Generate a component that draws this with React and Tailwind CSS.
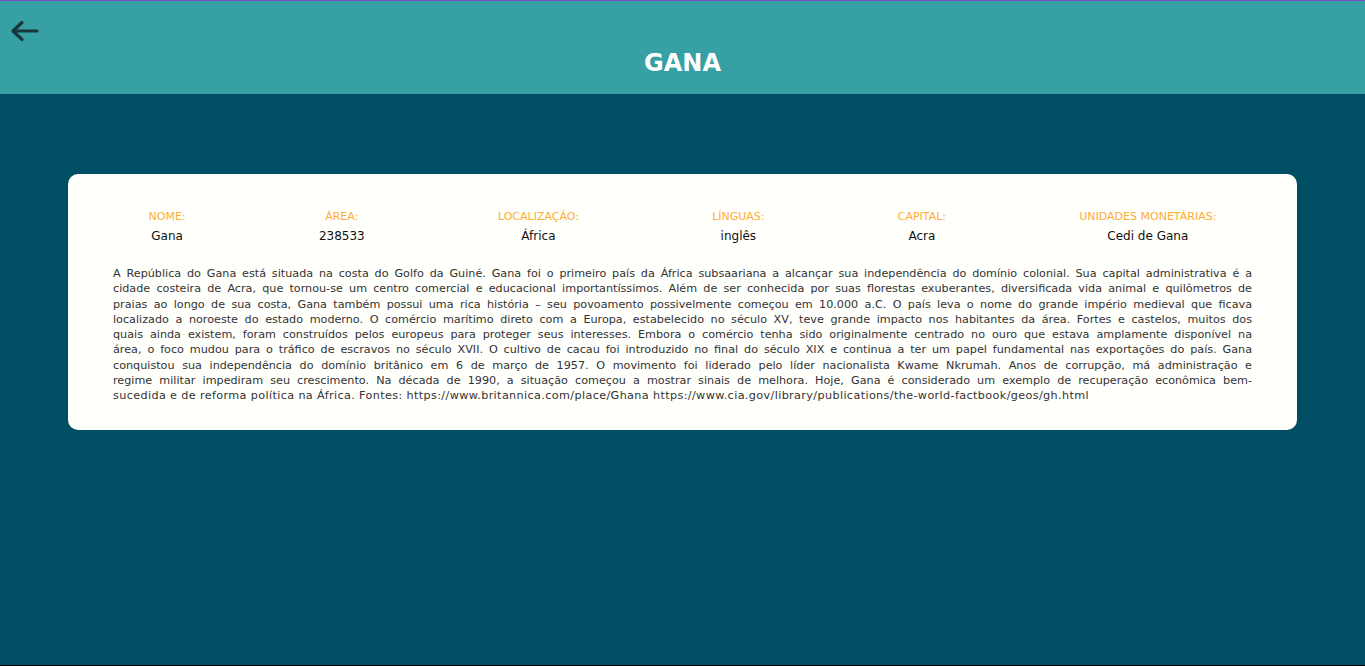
export default function App() {
  const fields = [
    ["NOME:", "Gana"],
    ["ÁREA:", "238533"],
    ["LOCALIZAÇÃO:", "África"],
    ["LÍNGUAS:", "inglês"],
    ["CAPITAL:", "Acra"],
    ["UNIDADES MONETÁRIAS:", "Cedi de Gana"],
  ];
  const lines = [
    "A República do Gana está situada na costa do Golfo da Guiné. Gana foi o primeiro país da África subsaariana a alcançar sua independência do domínio colonial. Sua capital administrativa é a",
    "cidade costeira de Acra, que tornou-se um centro comercial e educacional importantíssimos. Além de ser conhecida por suas florestas exuberantes, diversificada vida animal e quilômetros de",
    "praias ao longo de sua costa, Gana também possui uma rica história – seu povoamento possivelmente começou em 10.000 a.C. O país leva o nome do grande império medieval que ficava",
    "localizado a noroeste do estado moderno. O comércio marítimo direto com a Europa, estabelecido no século XV, teve grande impacto nos habitantes da área. Fortes e castelos, muitos dos",
    "quais ainda existem, foram construídos pelos europeus para proteger seus interesses. Embora o comércio tenha sido originalmente centrado no ouro que estava amplamente disponível na",
    "área, o foco mudou para o tráfico de escravos no século XVII. O cultivo de cacau foi introduzido no final do século XIX e continua a ter um papel fundamental nas exportações do país. Gana",
    "conquistou sua independência do domínio britânico em 6 de março de 1957. O movimento foi liderado pelo líder nacionalista Kwame Nkrumah. Anos de corrupção, má administração e",
    "regime militar impediram seu crescimento. Na década de 1990, a situação começou a mostrar sinais de melhora. Hoje, Gana é considerado um exemplo de recuperação econômica bem-",
  ];
  const lastLine =
    "sucedida e de reforma política na África. Fontes: https://www.britannica.com/place/Ghana https://www.cia.gov/library/publications/the-world-factbook/geos/gh.html";
  return (
    <div className="flex h-[666px] flex-col border-t border-b border-t-[#7a4fbf] border-b-black bg-[#004e63] font-['DejaVu_Sans',sans-serif]">
      <header className="relative flex h-[93px] shrink-0 items-start justify-center bg-[#37a0a4]">
        <button className="absolute left-[10px] top-[19px] text-[#18363b]">
          <svg width="30" height="24" viewBox="0 0 30 24" fill="none" stroke="currentColor" strokeWidth="3.2" strokeLinecap="round" strokeLinejoin="round">
            <path d="M27 11H4M12 2.5L3 11l9 8.5" />
          </svg>
        </button>
        <h1 className="mt-[46px] text-[24px] font-semibold leading-[32px] text-white">GANA</h1>
      </header>
      <main className="flex-1 px-[68px] pt-[80px]">
        <div className="rounded-[10px] bg-[#fffffb] px-[45px] pb-[27px] pt-[36px]">
          <div className="mx-[-31px] flex justify-around">
            {fields.map(([label, value]) => (
              <div key={label} className="flex flex-col items-center">
                <span className="text-[11px] leading-[14px] text-[#ffac36]">{label}</span>
                <span className="mt-[5px] text-[12px] leading-[15px] text-[#111]">{value}</span>
              </div>
            ))}
          </div>
          <p className="mt-[22px] text-[11.2px] leading-[15.25px] text-[#333]">
            {lines.map((l, i) => (
              <span key={i} className="block text-justify [text-align-last:justify]">
                {l}
              </span>
            ))}
            <span className="block tracking-[0.38px]">{lastLine}</span>
          </p>
        </div>
      </main>
    </div>
  );
}
